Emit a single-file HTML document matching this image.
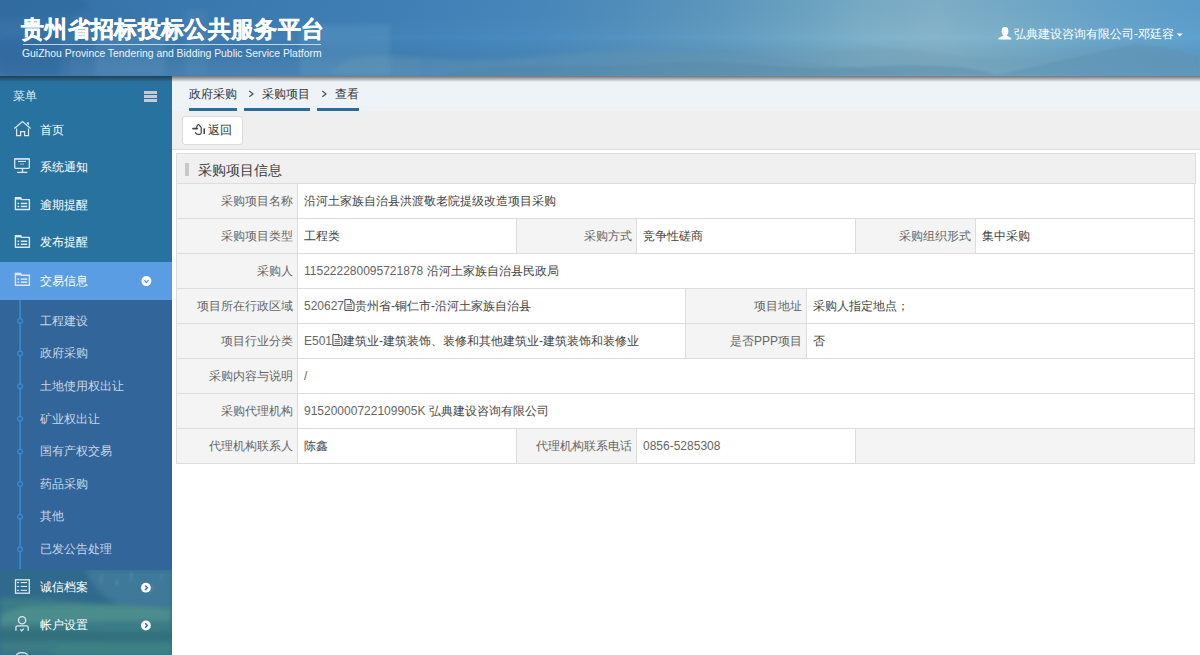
<!DOCTYPE html><html><head><meta charset="utf-8"><style>
*{box-sizing:border-box;margin:0;padding:0}
html,body{width:1200px;height:655px;overflow:hidden;background:#fff;font-family:"Liberation Sans",sans-serif;font-size:12px;color:#333}
.a{position:absolute;white-space:nowrap}
#hdr{position:absolute;left:0;top:0;width:1200px;height:76px;overflow:hidden;
 background:#4a8cc0;}
#hdrshadow{position:absolute;left:0;top:76px;width:1200px;height:6px;background:linear-gradient(180deg,rgba(30,30,30,.6),rgba(120,120,120,0));z-index:5}
#side{position:absolute;left:0;top:76px;width:172px;height:579px;background:#28729f;overflow:hidden}
#main{position:absolute;left:172px;top:76px;width:1028px;height:579px;background:#fff;overflow:hidden}
.cell{position:absolute;height:34px;line-height:34px;white-space:nowrap;overflow:hidden;font-size:12px}
.lb{background:#f4f4f4;color:#666;text-align:right;padding-right:4px}
.vl{background:#fff;color:#444;padding-left:6px}
.dg{color:#666}
.hl{position:absolute;height:1px;background:#ddd}
.vln{position:absolute;width:1px;background:#ddd}
.mt{position:absolute;left:40px;line-height:16px;color:#fff;white-space:nowrap}
.st{position:absolute;left:40px;line-height:16px;color:#c9d7e5;white-space:nowrap}
</style></head><body>
<div id="hdr">
<svg style="position:absolute;left:0;top:0" width="1200" height="76" viewBox="0 0 1200 76">
<defs>
<linearGradient id="hg" x1="0" y1="0" x2="1" y2="0">
<stop offset="0" stop-color="#3873a8"/><stop offset="0.15" stop-color="#3b7bb2"/><stop offset="0.33" stop-color="#4283ba"/>
<stop offset="0.45" stop-color="#4a8bbf"/><stop offset="0.52" stop-color="#5592bf"/><stop offset="0.6" stop-color="#619cc2"/>
<stop offset="0.67" stop-color="#70a8c6"/><stop offset="0.72" stop-color="#7eb1ca"/><stop offset="0.78" stop-color="#86b5cc"/>
<stop offset="0.85" stop-color="#78afcb"/><stop offset="0.92" stop-color="#6aa7cd"/><stop offset="1" stop-color="#5ea1cf"/>
</linearGradient>
<linearGradient id="vg" x1="0" y1="0" x2="0" y2="1">
<stop offset="0" stop-color="#1d4f80" stop-opacity="0.08"/><stop offset="0.5" stop-color="#000" stop-opacity="0"/><stop offset="1" stop-color="#5a8aa6" stop-opacity="0.18"/>
</linearGradient>
<filter id="bl" x="-5%" y="-50%" width="110%" height="200%"><feGaussianBlur stdDeviation="2.2"/></filter>
<filter id="bl2" x="-5%" y="-50%" width="110%" height="200%"><feGaussianBlur stdDeviation="1"/></filter>
</defs>
<rect width="1200" height="76" fill="url(#hg)"/>
<rect width="1200" height="76" fill="url(#vg)"/>
<g filter="url(#bl)">
<rect x="0" y="36" width="60" height="40" fill="#24609a" fill-opacity="0.35"/>
<ellipse cx="30" cy="5" rx="60" ry="14" fill="#1f5a90" fill-opacity="0.25"/>
<rect x="95" y="30" width="70" height="46" fill="#8ab3cf" fill-opacity="0.14"/>
<rect x="185" y="10" width="22" height="66" fill="#8ab3cf" fill-opacity="0.10"/>
<rect x="300" y="25" width="90" height="51" fill="#8ab3cf" fill-opacity="0.16"/>
<rect x="70" y="58" width="350" height="18" fill="#7aa5c2" fill-opacity="0.10"/>
<path d="M330,76 C340,60 360,52 400,56 C440,60 470,62 520,58 C560,54 600,50 650,52 C700,54 740,58 800,54 C860,48 900,46 950,54 C990,62 1020,60 1060,52 C1100,44 1140,40 1170,48 C1185,52 1195,54 1200,56 L1200,76 Z" fill="#6d9ab4" fill-opacity="0.30"/>
</g>
<g filter="url(#bl2)">
<path d="M440,76 C460,68 500,64 560,66 C620,68 660,60 720,62 C760,64 800,70 840,68 C880,66 930,62 980,70 L1000,76 Z" fill="#4f7f9c" fill-opacity="0.30"/>
<path d="M990,76 C1030,68 1080,56 1135,44 C1165,46 1185,52 1200,56 L1200,76 Z" fill="#5a90b2" fill-opacity="0.45"/>
<path d="M600,76 C620,62 660,52 700,50 C740,48 760,56 800,62 C840,66 880,70 920,76 Z" fill="#5d8eac" fill-opacity="0.28"/>
</g>
</svg>
<div class="a" style="left:21px;top:13px;color:#fff;font-size:23px;font-weight:bold;line-height:32px;letter-spacing:0.33px;-webkit-text-stroke:0.35px #fff">贵州省招标投标公共服务平台</div>
<div class="a" style="left:23px;top:44px;width:298px;height:1px;background:rgba(225,238,248,.8)"></div>
<div class="a" style="left:22px;top:47px;color:#eef4fa;font-size:10.4px;line-height:13px">GuiZhou Province Tendering and Bidding Public Service Platform</div>
<div class="a" style="left:1014px;top:26px;color:#fff;font-size:12px;line-height:16px">弘典建设咨询有限公司-邓廷容</div>
</div><div id="hdrshadow"></div>
<div id="side">
<div class="a" style="left:13px;top:12px;line-height:16px;color:#e3ecf3">菜单</div>
<div class="a" style="left:144px;top:15px;width:13px;height:2.5px;background:#c3ccd6"></div>
<div class="a" style="left:144px;top:19px;width:13px;height:2.5px;background:#c3ccd6"></div>
<div class="a" style="left:144px;top:23px;width:13px;height:2.5px;background:#c3ccd6"></div>
<div class="a" style="left:0;top:186px;width:172px;height:38px;background:#5a9de2"></div>
<div class="a" style="left:0;top:224px;width:172px;height:269px;background:#326599"></div>
<svg style="position:absolute;left:0;top:493px" width="172" height="86" viewBox="0 569 172 86">
<defs><filter id="lb" x="-20%" y="-20%" width="140%" height="140%"><feGaussianBlur stdDeviation="2.5"/></filter>
<filter id="lb2" x="-20%" y="-20%" width="140%" height="140%"><feGaussianBlur stdDeviation="0.8"/></filter></defs>
<rect x="0" y="569" width="172" height="86" fill="#2f6a8c"/>
<g filter="url(#lb)">
<path d="M85,569 L172,569 L172,610 L125,606 C105,600 92,588 85,569 Z" fill="#4781a0" fill-opacity="0.65"/>
<path d="M0,598 C30,597 60,600 90,603 L172,606 L172,655 L0,655 Z" fill="#3a7c86"/>
<path d="M22,607 C60,604 120,604 172,609 L172,621 C120,620 60,621 0,625 L0,615 Z" fill="#4b8d8d"/>
<path d="M0,630 C50,628 100,634 172,631 L172,641 C110,643 50,639 0,641 Z" fill="#2e6878" fill-opacity="0.65"/>
<path d="M60,645 C100,644 140,646 172,645 L172,655 L50,655 Z" fill="#3f8483" fill-opacity="0.7"/>
</g>
<g filter="url(#lb2)" fill="#5b8fa8" fill-opacity="0.35">
<rect x="100" y="575" width="3" height="8"/><rect x="115" y="580" width="4" height="6"/><rect x="130" y="572" width="3" height="9"/><rect x="150" y="585" width="4" height="7"/><rect x="160" y="574" width="3" height="6"/>
</g>
<rect x="0" y="569" width="172" height="1" fill="#2e6a8e"/>
</svg>
<div class="mt" style="top:45.5px">首页</div>
<div class="mt" style="top:83.0px">系统通知</div>
<div class="mt" style="top:120.5px">逾期提醒</div>
<div class="mt" style="top:158.0px">发布提醒</div>
<div class="mt" style="top:196.6px">交易信息</div>
<div class="st" style="top:236.6px">工程建设</div>
<div class="st" style="top:269.2px">政府采购</div>
<div class="st" style="top:301.9px">土地使用权出让</div>
<div class="st" style="top:334.5px">矿业权出让</div>
<div class="st" style="top:367.1px">国有产权交易</div>
<div class="st" style="top:399.8px">药品采购</div>
<div class="st" style="top:432.4px">其他</div>
<div class="st" style="top:465.0px">已发公告处理</div>
<div class="mt" style="top:503.0px">诚信档案</div>
<div class="mt" style="top:541.0px">帐户设置</div>
</div>
<div id="main">
<div class="a" style="left:0;top:0;width:1028px;height:35px;background:#eef3f8"></div>
<div class="a" style="left:17px;top:10px;line-height:16px;color:#333">政府采购</div>
<div class="a" style="left:90px;top:10px;line-height:16px;color:#333">采购项目</div>
<div class="a" style="left:163px;top:10px;line-height:16px;color:#333">查看</div>
<div class="a" style="left:17px;top:32px;width:48px;height:3px;background:#2b6b9b"></div>
<div class="a" style="left:72px;top:32px;width:66px;height:3px;background:#2b6b9b"></div>
<div class="a" style="left:145px;top:32px;width:42px;height:3px;background:#2b6b9b"></div>
<div class="a" style="left:0;top:35px;width:1028px;height:38px;background:#efefef"></div>
<div class="a" style="left:0;top:73px;width:1028px;height:1px;background:#ddd"></div>
<div class="a" style="left:10px;top:40px;width:61px;height:29px;background:#fff;border:1px solid #dcdcdc;border-radius:3px"></div>
<div class="a" style="left:36px;top:46px;line-height:16px;color:#333">返回</div>
</div>
<div class="a" style="left:176px;top:153px;width:1020px;height:31px;background:#f0f0f0;border:1px solid #ddd;border-bottom:1px solid #ddd"></div>
<div class="a" style="left:185px;top:163px;width:4px;height:13px;background:#c8c8c8"></div>
<div class="a" style="left:198px;top:161px;font-size:14px;line-height:18px;color:#3a3a3a">采购项目信息</div>
<div class="cell lb" style="left:177px;top:184px;width:120px">采购项目名称</div>
<div class="vln" style="left:176px;top:183px;height:36px"></div>
<div class="cell vl" style="left:298px;top:184px;width:896px">沿河土家族自治县洪渡敬老院提级改造项目采购</div>
<div class="vln" style="left:297px;top:183px;height:36px"></div>
<div class="vln" style="left:1194px;top:183px;height:36px"></div>
<div class="hl" style="left:176px;top:183px;width:1019px"></div>
<div class="cell lb" style="left:177px;top:219px;width:120px">采购项目类型</div>
<div class="vln" style="left:176px;top:218px;height:36px"></div>
<div class="cell vl" style="left:298px;top:219px;width:218px">工程类</div>
<div class="vln" style="left:297px;top:218px;height:36px"></div>
<div class="cell lb" style="left:517px;top:219px;width:119px">采购方式</div>
<div class="vln" style="left:516px;top:218px;height:36px"></div>
<div class="cell vl" style="left:637px;top:219px;width:218px">竞争性磋商</div>
<div class="vln" style="left:636px;top:218px;height:36px"></div>
<div class="cell lb" style="left:856px;top:219px;width:119px">采购组织形式</div>
<div class="vln" style="left:855px;top:218px;height:36px"></div>
<div class="cell vl" style="left:976px;top:219px;width:218px">集中采购</div>
<div class="vln" style="left:975px;top:218px;height:36px"></div>
<div class="vln" style="left:1194px;top:218px;height:36px"></div>
<div class="hl" style="left:176px;top:218px;width:1019px"></div>
<div class="cell lb" style="left:177px;top:254px;width:120px">采购人</div>
<div class="vln" style="left:176px;top:253px;height:36px"></div>
<div class="cell vl" style="left:298px;top:254px;width:896px"><span class="dg">115222280095721878</span> 沿河土家族自治县民政局</div>
<div class="vln" style="left:297px;top:253px;height:36px"></div>
<div class="vln" style="left:1194px;top:253px;height:36px"></div>
<div class="hl" style="left:176px;top:253px;width:1019px"></div>
<div class="cell lb" style="left:177px;top:289px;width:120px">项目所在行政区域</div>
<div class="vln" style="left:176px;top:288px;height:36px"></div>
<div class="cell vl" style="left:298px;top:289px;width:387px"><span class="dg">520627</span><svg class="bx" width="11" height="12" viewBox="0 0 11 12" style="display:inline-block;vertical-align:-1px"><path d="M0.9,0.6 L6.9,0.6 L10,3.7 L10,11.4 L0.9,11.4 Z" fill="none" stroke="#444" stroke-width="1"/><path d="M6.6,0.6 L6.6,3.9 L10,3.9" fill="none" stroke="#556" stroke-width="0.9"/><rect x="2.6" y="5.2" width="5.4" height="0.9" fill="#555"/><rect x="2.6" y="7.2" width="5.4" height="0.9" fill="#555"/><rect x="2.6" y="9" width="5.4" height="0.9" fill="#777"/></svg>贵州省-铜仁市-沿河土家族自治县</div>
<div class="vln" style="left:297px;top:288px;height:36px"></div>
<div class="cell lb" style="left:686px;top:289px;width:120px">项目地址</div>
<div class="vln" style="left:685px;top:288px;height:36px"></div>
<div class="cell vl" style="left:807px;top:289px;width:387px">采购人指定地点；</div>
<div class="vln" style="left:806px;top:288px;height:36px"></div>
<div class="vln" style="left:1194px;top:288px;height:36px"></div>
<div class="hl" style="left:176px;top:288px;width:1019px"></div>
<div class="cell lb" style="left:177px;top:324px;width:120px">项目行业分类</div>
<div class="vln" style="left:176px;top:323px;height:36px"></div>
<div class="cell vl" style="left:298px;top:324px;width:387px"><span class="dg">E501</span><svg class="bx" width="11" height="12" viewBox="0 0 11 12" style="display:inline-block;vertical-align:-1px"><path d="M0.9,0.6 L6.9,0.6 L10,3.7 L10,11.4 L0.9,11.4 Z" fill="none" stroke="#444" stroke-width="1"/><path d="M6.6,0.6 L6.6,3.9 L10,3.9" fill="none" stroke="#556" stroke-width="0.9"/><rect x="2.6" y="5.2" width="5.4" height="0.9" fill="#555"/><rect x="2.6" y="7.2" width="5.4" height="0.9" fill="#555"/><rect x="2.6" y="9" width="5.4" height="0.9" fill="#777"/></svg>建筑业-建筑装饰、装修和其他建筑业-建筑装饰和装修业</div>
<div class="vln" style="left:297px;top:323px;height:36px"></div>
<div class="cell lb" style="left:686px;top:324px;width:120px">是否PPP项目</div>
<div class="vln" style="left:685px;top:323px;height:36px"></div>
<div class="cell vl" style="left:807px;top:324px;width:387px">否</div>
<div class="vln" style="left:806px;top:323px;height:36px"></div>
<div class="vln" style="left:1194px;top:323px;height:36px"></div>
<div class="hl" style="left:176px;top:323px;width:1019px"></div>
<div class="cell lb" style="left:177px;top:359px;width:120px">采购内容与说明</div>
<div class="vln" style="left:176px;top:358px;height:36px"></div>
<div class="cell vl" style="left:298px;top:359px;width:896px"><span class="dg">/</span></div>
<div class="vln" style="left:297px;top:358px;height:36px"></div>
<div class="vln" style="left:1194px;top:358px;height:36px"></div>
<div class="hl" style="left:176px;top:358px;width:1019px"></div>
<div class="cell lb" style="left:177px;top:394px;width:120px">采购代理机构</div>
<div class="vln" style="left:176px;top:393px;height:36px"></div>
<div class="cell vl" style="left:298px;top:394px;width:896px"><span class="dg">91520000722109905K</span> 弘典建设咨询有限公司</div>
<div class="vln" style="left:297px;top:393px;height:36px"></div>
<div class="vln" style="left:1194px;top:393px;height:36px"></div>
<div class="hl" style="left:176px;top:393px;width:1019px"></div>
<div class="cell lb" style="left:177px;top:429px;width:120px">代理机构联系人</div>
<div class="vln" style="left:176px;top:428px;height:36px"></div>
<div class="cell vl" style="left:298px;top:429px;width:218px">陈鑫</div>
<div class="vln" style="left:297px;top:428px;height:36px"></div>
<div class="cell lb" style="left:517px;top:429px;width:119px">代理机构联系电话</div>
<div class="vln" style="left:516px;top:428px;height:36px"></div>
<div class="cell vl" style="left:637px;top:429px;width:218px"><span class="dg">0856-5285308</span></div>
<div class="vln" style="left:636px;top:428px;height:36px"></div>
<div class="cell lb" style="left:856px;top:429px;width:338px"></div>
<div class="vln" style="left:855px;top:428px;height:36px"></div>
<div class="vln" style="left:1194px;top:428px;height:36px"></div>
<div class="hl" style="left:176px;top:428px;width:1019px"></div>
<div class="hl" style="left:176px;top:463px;width:1019px"></div>
<svg style="position:absolute;left:0;top:0;z-index:20" width="1200" height="655" viewBox="0 0 1200 655"><g fill="none" stroke="#dce8f1" stroke-width="1.25" stroke-linejoin="miter"><polyline points="14.3,128.4 22.5,121.6 30.6,128.4"/><polyline points="16.6,128.6 16.6,135.6 20.6,135.6 20.6,131.6 24.6,131.6 24.6,135.6 28.5,135.6 28.5,128.6"/></g><path d="M26.6,123.2 L27.2,122.2 L28.9,122.2 L28.9,125.4 Z" fill="#dce8f1"/><g fill="none" stroke="#dce8f1" stroke-width="1.3"><rect x="14.7" y="158.8" width="14.6" height="9.6" rx="0.8"/><line x1="22.5" y1="168.6" x2="22.5" y2="172"/><line x1="17.2" y1="172.4" x2="27.3" y2="172.4"/></g><rect x="14.2" y="158.2" width="15.6" height="1.4" fill="#dce8f1" opacity=".8"/><rect x="18" y="160.9" width="8" height="1.1" fill="#dce8f1"/><rect x="20" y="163.6" width="4" height="1.1" fill="#dce8f1" opacity=".6"/><path d="M15.4,198.79999999999998 L15.4,209.5 L29.4,209.5 L29.4,199.6 L21.6,199.6 L20.6,197.79999999999998 L15.4,197.79999999999998 Z" fill="none" stroke="#dce8f1" stroke-width="1.4" stroke-linejoin="round"/><rect x="15" y="197.2" width="6.2" height="2.4" fill="#dce8f1"/><rect x="17.5" y="202.7" width="1.6" height="1.5" fill="#dce8f1"/><rect x="20.8" y="202.7" width="6.4" height="1.5" fill="#dce8f1"/><rect x="17.5" y="205.7" width="1.6" height="1.5" fill="#dce8f1"/><rect x="20.8" y="205.7" width="6.4" height="1.5" fill="#dce8f1"/><path d="M15.4,236.6 L15.4,247.3 L29.4,247.3 L29.4,237.4 L21.6,237.4 L20.6,235.6 L15.4,235.6 Z" fill="none" stroke="#dce8f1" stroke-width="1.4" stroke-linejoin="round"/><rect x="15" y="235.0" width="6.2" height="2.4" fill="#dce8f1"/><rect x="17.5" y="240.5" width="1.6" height="1.5" fill="#dce8f1"/><rect x="20.8" y="240.5" width="6.4" height="1.5" fill="#dce8f1"/><rect x="17.5" y="243.5" width="1.6" height="1.5" fill="#dce8f1"/><rect x="20.8" y="243.5" width="6.4" height="1.5" fill="#dce8f1"/><path d="M15.4,274.5 L15.4,285.2 L29.4,285.2 L29.4,275.29999999999995 L21.6,275.29999999999995 L20.6,273.5 L15.4,273.5 Z" fill="none" stroke="#dce8f1" stroke-width="1.4" stroke-linejoin="round"/><rect x="15" y="272.9" width="6.2" height="2.4" fill="#dce8f1"/><rect x="17.5" y="278.4" width="1.6" height="1.5" fill="#dce8f1"/><rect x="20.8" y="278.4" width="6.4" height="1.5" fill="#dce8f1"/><rect x="17.5" y="281.4" width="1.6" height="1.5" fill="#dce8f1"/><rect x="20.8" y="281.4" width="6.4" height="1.5" fill="#dce8f1"/><rect x="15.5" y="579.8" width="13.8" height="13.4" fill="none" stroke="#dce8f1" stroke-width="1.3"/><rect x="17.1" y="582.0" width="2" height="1.1" fill="#dce8f1"/><rect x="20.8" y="582.0" width="6.2" height="1.1" fill="#dce8f1"/><rect x="17.1" y="585.9" width="2" height="1.1" fill="#dce8f1"/><rect x="20.8" y="585.9" width="6.2" height="1.1" fill="#dce8f1"/><rect x="17.1" y="589.8" width="2" height="1.1" fill="#dce8f1"/><rect x="20.8" y="589.8" width="6.2" height="1.1" fill="#dce8f1"/><g fill="none" stroke="#dce8f1" stroke-width="1.3"><circle cx="22.1" cy="620.3" r="3.6"/><path d="M15.9,630.8 L15.9,627.6 Q15.9,625.9 17.7,625.9 L26.4,625.9 Q28.2,625.9 28.2,627.6 L28.2,630.8"/><polyline points="20.3,629.4 21.6,630.8 23.9,628.6"/></g><path d="M16.5,656 Q16.5,652.6 22,652.6 Q27.5,652.6 27.5,656" fill="none" stroke="#dce8f1" stroke-width="1.2"/><polyline points="249.3,91 253,93.9 249.3,96.8" fill="none" stroke="#444" stroke-width="1.1"/><polyline points="322.3,91 326,93.9 322.3,96.8" fill="none" stroke="#444" stroke-width="1.1"/><circle cx="146.4" cy="281.1" r="5" fill="#fff"/><polyline points="144.2,280.1 146.4,282.5 148.6,280.1" fill="none" stroke="#5a9de2" stroke-width="1.4"/><circle cx="145.9" cy="587.7" r="4.9" fill="#fff"/><polyline points="145.1,585.4000000000001 147.4,587.7 145.1,590.0" fill="none" stroke="#2f6f97" stroke-width="1.4"/><circle cx="145.9" cy="625.5" r="4.9" fill="#fff"/><polyline points="145.1,623.2 147.4,625.5 145.1,627.8" fill="none" stroke="#2f6f97" stroke-width="1.4"/><rect x="19.3" y="300" width="1.6" height="269" fill="#3a8bd0"/><circle cx="20.1" cy="320.9" r="2.3" fill="#326599" stroke="#3a8bd0" stroke-width="1.3"/><circle cx="20.1" cy="353.5" r="2.3" fill="#326599" stroke="#3a8bd0" stroke-width="1.3"/><circle cx="20.1" cy="386.2" r="2.3" fill="#326599" stroke="#3a8bd0" stroke-width="1.3"/><circle cx="20.1" cy="418.8" r="2.3" fill="#326599" stroke="#3a8bd0" stroke-width="1.3"/><circle cx="20.1" cy="451.4" r="2.3" fill="#326599" stroke="#3a8bd0" stroke-width="1.3"/><circle cx="20.1" cy="484.0" r="2.3" fill="#326599" stroke="#3a8bd0" stroke-width="1.3"/><circle cx="20.1" cy="516.7" r="2.3" fill="#326599" stroke="#3a8bd0" stroke-width="1.3"/><circle cx="20.1" cy="549.3" r="2.3" fill="#326599" stroke="#3a8bd0" stroke-width="1.3"/><ellipse cx="1005" cy="31.2" rx="3.4" ry="4.2" fill="#fff"/><path d="M1003.2,34.6 L1003.2,35.8 L999.4,37.4 Q998.4,37.9 998.4,38.6 L998.4,39.4 L1011.2,39.4 L1011.2,38.6 Q1011.2,37.9 1010.2,37.4 L1006.8,35.8 L1006.8,34.6 Z" fill="#fff"/><polygon points="1176.6,33.4 1182.8,33.4 1179.7,36.6" fill="#fff"/><line x1="193" y1="128.6" x2="197.2" y2="128.6" stroke="#444" stroke-width="1.7" stroke-linecap="round"/><path d="M196.2,128.2 L197.6,125 Q198.2,124.2 199,124.8 L200.7,126.8 Q201.2,127.4 201.2,128.2 L201.2,132.8 Q201.2,134.3 199.8,134.3 L197.8,134.3 Q195.7,134.3 195.4,132.2" fill="none" stroke="#444" stroke-width="1.2" stroke-linejoin="round"/><rect x="203.5" y="128.4" width="1.4" height="5.6" fill="#333"/></svg>
</body></html>
